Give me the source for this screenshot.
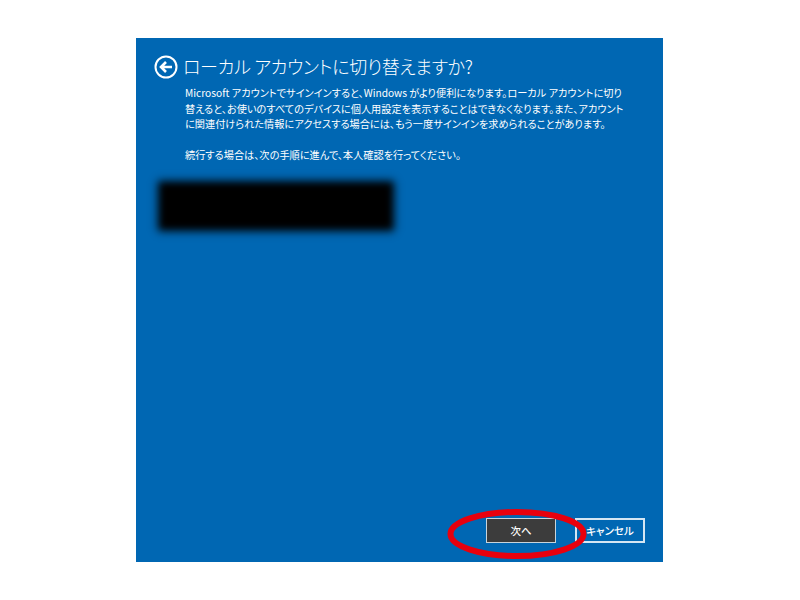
<div class="page">
    <main class="panel">
        <header class="title-row">
            <svg class="back" viewBox="0 0 24 24" width="24" height="24" aria-hidden="true">
                <circle cx="12" cy="12" r="10.5" fill="none" stroke="#fff" stroke-width="2" />
                <path d="M18 12H7.5M12 7l-5 5 5 5" fill="none" stroke="#fff" stroke-width="2.6" />
            </svg>
            <h1>ローカル アカウントに切り替えますか?</h1>
        </header>

        <div class="body">
            <p>
                Microsoft アカウントでサインインすると、Windows がより便利になります。ローカル アカウントに切り<br />
                替えると、お使いのすべてのデバイスに個人用設定を表示することはできなくなります。また、アカウント<br />
                に関連付けられた情報にアクセスする場合には、もう一度サインインを求められることがあります。
            </p>
            <p class="next-step">続行する場合は、次の手順に進んで、本人確認を行ってください。</p>
            <div class="redacted"></div>
        </div>

        <footer class="actions">
            <div class="next-wrap">
                <button class="primary">次へ</button>
                <svg class="circle" viewBox="0 0 140 54" width="140" height="54" aria-hidden="true">
                    <ellipse cx="70" cy="27" rx="66.5" ry="22" fill="none" stroke="#e8000d" stroke-width="6" />
                </svg>
            </div>
            <button>キャンセル</button>
        </footer>
    </main>
</div>

<style>
    :global(body) {
        background: #fff;
    }

    .page {
        display: flex;
        justify-content: center;
        padding-top: 38px;
        height: 562px;
        font-family: "Noto Sans CJK JP", "Noto Sans", sans-serif;
        font-feature-settings: "palt";
    }

    .panel {
        width: 527px;
        height: 524px;
        box-sizing: border-box;
        margin-right: 1px;
        padding: 15px 18px 19px 18px;
        background: #0067b3;
        color: #fff;
        display: flex;
        flex-direction: column;
    }

    .title-row {
        display: flex;
        align-items: center;
        gap: 5px;
        height: 27px;
    }

    .back {
        flex: none;
    }

    h1 {
        margin: 0;
        font-size: 18px;
        font-weight: 300;
        line-height: 27px;
        white-space: nowrap;
        letter-spacing: -0.3px;
    }

    .body {
        flex: 1;
        padding: 5px 0 0 31px;
    }

    p {
        margin: 0;
        font-size: 10.2px;
        line-height: 15.5px;
        white-space: nowrap;
    }

    .next-step {
        margin-top: 15.5px;
    }

    .redacted {
        width: 230px;
        height: 44px;
        margin: 21px 0 0 -24px;
        background: #000;
        box-shadow: 0 0 6px 3px #000;
        filter: blur(3px);
    }

    .actions {
        display: flex;
        justify-content: flex-end;
        gap: 19px;
    }

    button {
        width: 70px;
        height: 25px;
        padding: 0;
        border: 2px solid #d5e6f3;
        background: #0067b3;
        color: #fff;
        font-family: inherit;
        font-feature-settings: inherit;
        font-size: 10.5px;
        font-weight: 500;
    }

    .primary {
        background: #3c3c3c;
        border-width: 1.5px;
        border-color: #c8d4dc;
    }

    .next-wrap {
        position: relative;
        display: flex;
    }

    .circle {
        position: absolute;
        left: -39px;
        top: -11px;
        pointer-events: none;
    }
</style>
